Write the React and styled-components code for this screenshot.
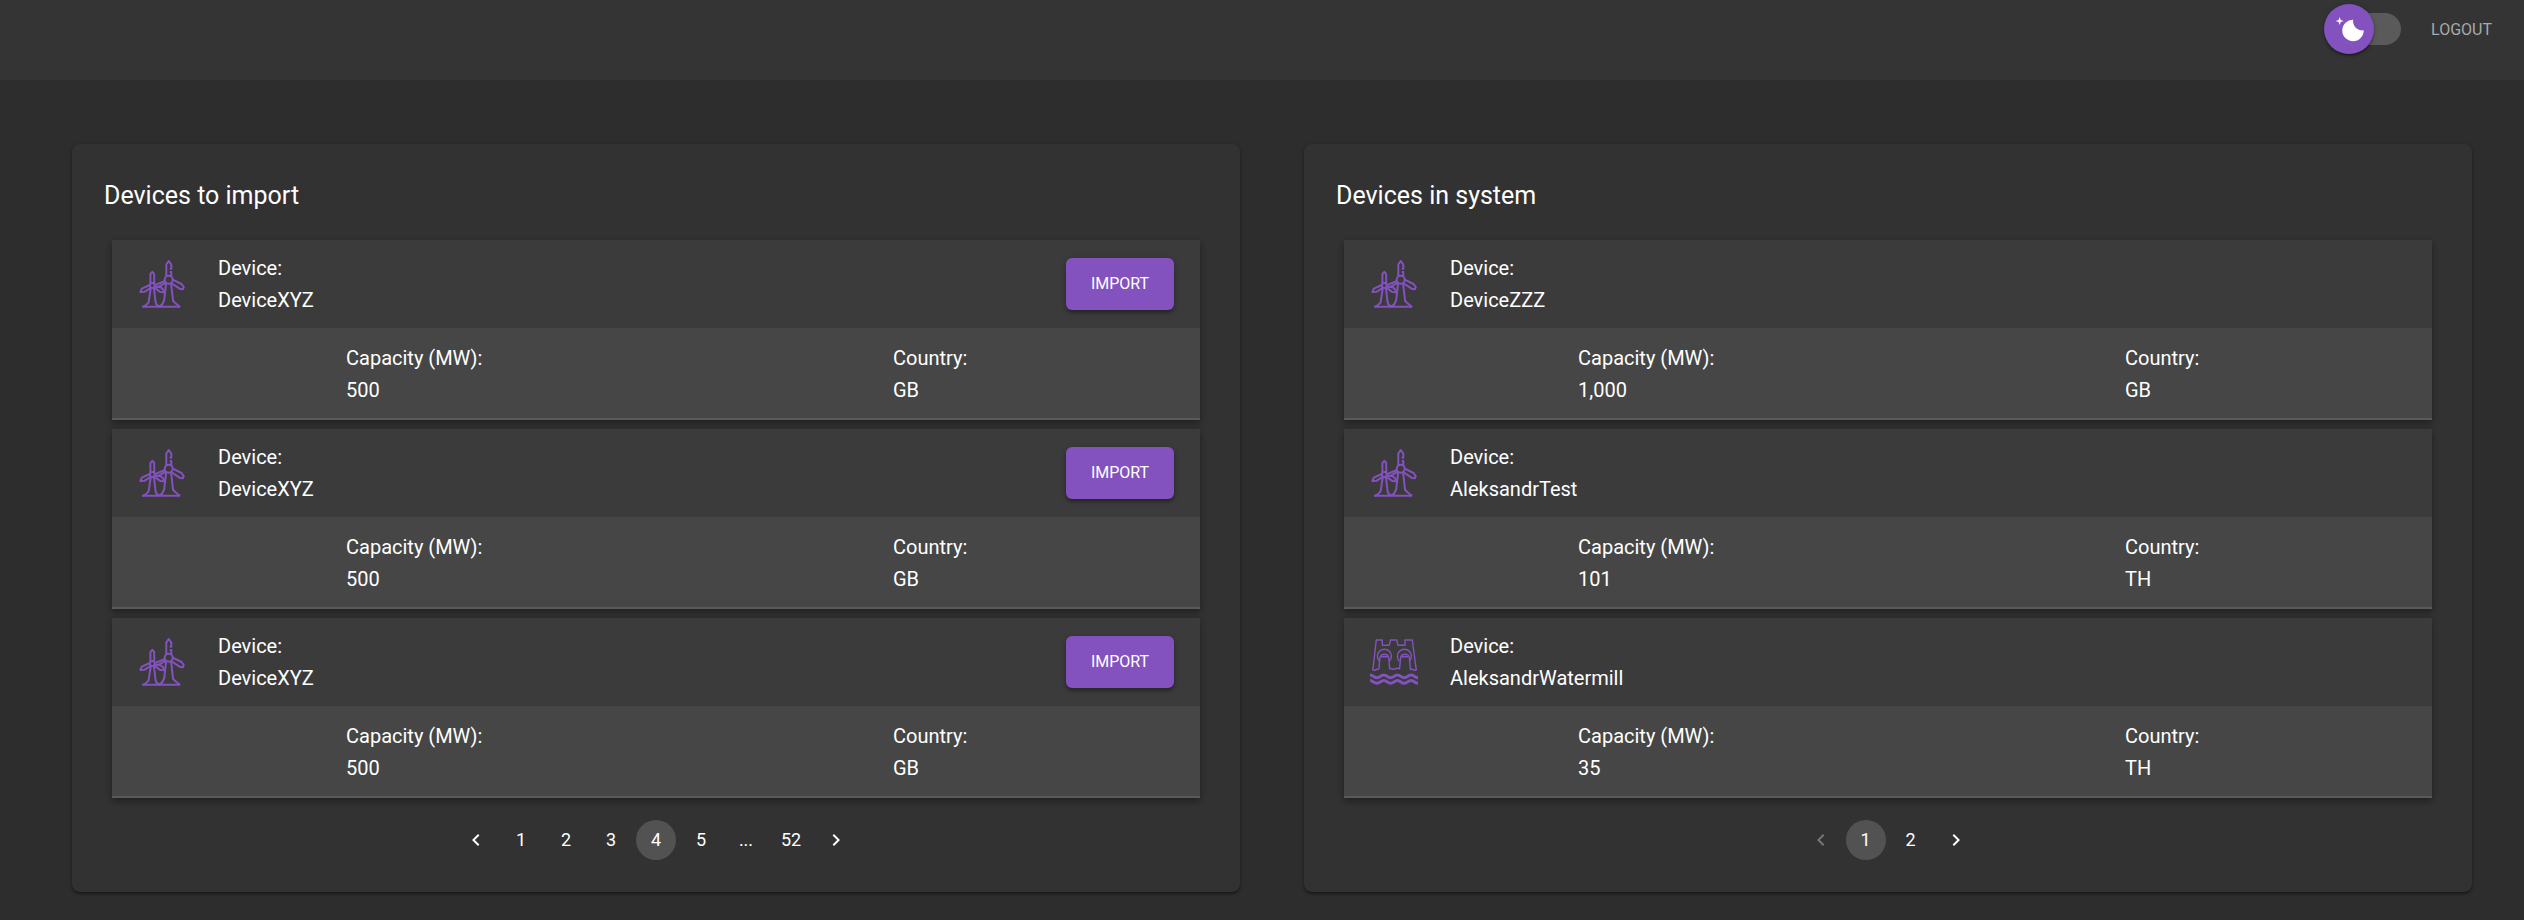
import React, { useState } from "react";
import styled, { createGlobalStyle, css } from "styled-components";
import { MdNavigateBefore, MdNavigateNext } from "react-icons/md";

const GlobalStyle = createGlobalStyle`
  *, *::before, *::after { box-sizing: border-box; }
  body {
    margin: 0;
    background: #2d2d2d;
    color: #fff;
    font-family: Roboto, "Liberation Sans", sans-serif;
    font-size: 20px;
    line-height: 32px;
  }
  button { font: inherit; }
`;

const Header = styled.header`
  display: flex;
  justify-content: flex-end;
  align-items: flex-start;
  gap: 30px;
  height: 80px;
  padding: 4px 32px 0 0;
  background: #343434;
`;

const Switch = styled.label`
  display: flex;
  align-items: center;
  position: relative;
  width: 77px;
  height: 50px;
  cursor: pointer;
`;

const SwitchInput = styled.input`
  position: absolute;
  inset: 0;
  margin: 0;
  opacity: 0;
  cursor: pointer;
`;

const Track = styled.span`
  width: 64px;
  height: 32px;
  margin-left: auto;
  border-radius: 16px;
  background: #5a5a5a;
`;

const Thumb = styled.span`
  position: absolute;
  top: 0;
  left: ${(p) => (p.$on ? "27px" : "0")};
  display: grid;
  place-items: center;
  width: 50px;
  height: 50px;
  border-radius: 50%;
  background: #8352bf;
  box-shadow: 0 2px 2px rgba(0, 0, 0, 0.3), 0 1px 5px rgba(0, 0, 0, 0.2);
  pointer-events: none;
`;

const LogoutButton = styled.button`
  height: 52px;
  padding: 0;
  border: 0;
  background: none;
  color: #a9a9a9;
  font-size: 16px;
  cursor: pointer;
`;

const Main = styled.main`
  display: grid;
  grid-template-columns: 1fr 1fr;
  gap: 64px;
  padding: 64px 52px 28px 72px;
`;

const Card = styled.section`
  padding: 32px;
  border-radius: 8px;
  background: #323232;
  box-shadow: 0 2px 2px rgba(0, 0, 0, 0.3), 0 1px 4px rgba(0, 0, 0, 0.2);
`;

const CardTitle = styled.h2`
  margin: 0 0 24px;
  font-size: 25px;
  font-weight: 400;
  line-height: 40px;
`;

const DeviceList = styled.ul`
  display: grid;
  gap: 9px;
  margin: 0 8px;
  padding: 0;
  list-style: none;
`;

const DeviceItem = styled.li`
  border-bottom: 2px solid #5a5a5a;
  background: #464646;
  box-shadow: 0 4px 6px rgba(0, 0, 0, 0.22), 0 1px 6px rgba(0, 0, 0, 0.16);
`;

const DeviceHead = styled.div`
  display: flex;
  align-items: center;
  gap: 32px;
  padding: 12px 26px;
  background: #3b3b3b;
`;

const DeviceDetails = styled.div`
  display: grid;
  grid-template-columns: 547fr 307fr;
  padding: 14px 0 12px 234px;
`;

const Field = styled.dl`
  flex: 1;
  margin: 0;
`;
const FieldLabel = styled.dt``;
const FieldValue = styled.dd`
  margin: 0;
`;

const ImportButton = styled.button`
  height: 52px;
  min-width: 108px;
  padding: 0 24px;
  border: 0;
  border-radius: 6px;
  background: #8352bf;
  color: #fff;
  font-size: 16px;
  cursor: pointer;
  box-shadow: 0 3px 3px rgba(0, 0, 0, 0.25), 0 1px 6px rgba(0, 0, 0, 0.18);
`;

const Pages = styled.nav`
  display: flex;
  justify-content: center;
  gap: 5px;
  margin-top: 22px;
`;

const pageCell = css`
  display: grid;
  place-items: center;
  width: 40px;
  height: 40px;
  padding: 0;
  font-size: 18px;
  line-height: 40px;
`;

const PageButton = styled.button`
  ${pageCell}
  border: 0;
  border-radius: 50%;
  background: ${(p) => (p.$current ? "#525252" : "none")};
  color: ${(p) => (p.disabled ? "#767676" : "#fff")};
  cursor: pointer;
`;

const PageGap = styled.span`
  ${pageCell}
`;

const DeviceIcon = styled.svg`
  flex: none;
  width: 48px;
  height: 48px;
  fill: none;
  stroke: #8352bf;
  stroke-width: ${(p) => p.$weight};
  stroke-linejoin: round;
`;

function WindIcon() {
  return (
    <DeviceIcon viewBox="0 0 48 48" $weight="2" role="img" aria-label="Wind">
      <circle cx="30.7" cy="19.7" r="4" />
      <circle cx="14.3" cy="25.5" r="2.5" />
      <path d="M28.3 16.2V4.5L30.7 1l2.6 3.5v4.2h-1.6M31.7 12h1.6v4.2" />
      <path d="M12.4 23.2V14l1.9-2.2 1.9 2.2v9.2" />
      <path d="M34.6 19.6l9 4.4 2.2 3.2-.9 2-3.4-.5-7.6-5.2" />
      <path d="M27 21l-10.2 4.2M27.7 22.8l-8.4 4.6" />
      <path d="M11.8 25l-8 3.6L2.4 32l4-.2 6.4-3.9" />
      <path d="M16.8 26.6l6 .7 2.8 2.6.2 2.4-3.4-.2-5.4-4" />
      <path d="M12.8 28l-2.2 14.3-2.6 2.9-3.2 1.6M15.9 28l1.7 14.3c.4 2 1.600 3.600 3.400 4.200 2.200-.4 3.400-2 4.200-4.200L26.200 40l1.900-16.400M33.100 23.600l2 17.400 3 2.800 3.800 3" />
      <path d="M4.2 46.8h38" />
    </DeviceIcon>
  );
}

function HydroIcon() {
  return (
    <DeviceIcon viewBox="0 0 48 48" $weight="1.4" role="img" aria-label="Hydro">
      <path d="M8.4 31.8l-1.6-.7-2 1.2-2-.2L6.3 2h6v5.2h7l1.2-5.2h6.2L28 7.2h7V2h7.3l4 30.1-2 .2-2-1.2-2.4.4" />
      <path d="M9.4 23.2a7 7 0 1 1 10 0M29.4 23.2a7 7 0 1 1 10 0" />
      <path d="M8.8 31.4l1.2-12a4.6 4.6 0 0 1 8.8 0l.8 11.4c1.8-1.2 3.2 1.4 5 .4s3-1.4 5-.4l1-11.4a4.6 4.6 0 0 1 8.8 0l1 12" />
      <path d="M10.6 18.8h7.4M31 18.8h7.4M11.6 16.6h5.6M31.8 16.6h5.6" />
      <path
        strokeWidth="3"
        d="M0 37c3.2 0 3.4 2.7 6.9 2.7s3.5-2.7 6.9-2.7 3.4 2.7 6.8 2.7 3.4-2.7 6.8-2.7 3.5 2.7 6.9 2.7 3.4-2.7 6.8-2.7 3.5 2.7 6.9 2.7M0 42.6c3.2 0 3.4 2.7 6.9 2.7s3.5-2.7 6.9-2.7 3.4 2.7 6.8 2.7 3.4-2.7 6.8-2.7 3.5 2.7 6.9 2.7 3.4-2.7 6.8-2.7 3.5 2.7 6.9 2.7"
      />
    </DeviceIcon>
  );
}

function MoonIcon() {
  return (
    <svg width="32" height="32" viewBox="0 0 20 20" fill="#fff" aria-hidden="true">
      <path d="M4.2 2.5l-.7 1.8-1.8.7 1.8.7.7 1.8.6-1.8L6.7 5l-1.9-.7-.6-1.8zm15 8.3a6.7 6.7 0 1 1-6.6-6.6 5.8 5.8 0 0 0 6.6 6.6z" />
    </svg>
  );
}

function LabeledValue({ label, value }) {
  return (
    <Field>
      <FieldLabel>{label}</FieldLabel>
      <FieldValue>{value}</FieldValue>
    </Field>
  );
}

function Device({ device, importable }) {
  return (
    <DeviceItem>
      <DeviceHead>
        {device.type === "hydro" ? <HydroIcon /> : <WindIcon />}
        <LabeledValue label="Device:" value={device.name} />
        {importable && <ImportButton type="button">IMPORT</ImportButton>}
      </DeviceHead>
      <DeviceDetails>
        <LabeledValue label="Capacity (MW):" value={device.capacity} />
        <LabeledValue label="Country:" value={device.country} />
      </DeviceDetails>
    </DeviceItem>
  );
}

function Pagination({ pages, initial, label }) {
  const [current, setCurrent] = useState(initial);
  const last = pages[pages.length - 1];
  return (
    <Pages aria-label={label}>
      <PageButton
        type="button"
        aria-label="Previous page"
        disabled={current === 1}
        onClick={() => setCurrent(current - 1)}
      >
        <MdNavigateBefore size={24} />
      </PageButton>
      {pages.map((page) =>
        page === "..." ? (
          <PageGap key={page}>...</PageGap>
        ) : (
          <PageButton
            key={page}
            type="button"
            $current={page === current}
            aria-current={page === current ? "page" : undefined}
            onClick={() => setCurrent(page)}
          >
            {page}
          </PageButton>
        )
      )}
      <PageButton
        type="button"
        aria-label="Next page"
        disabled={current === last}
        onClick={() => setCurrent(current + 1)}
      >
        <MdNavigateNext size={24} />
      </PageButton>
    </Pages>
  );
}

const toImport = [1, 2, 3].map((id) => ({
  id,
  type: "wind",
  name: "DeviceXYZ",
  capacity: "500",
  country: "GB",
}));

const inSystem = [
  { id: 1, type: "wind", name: "DeviceZZZ", capacity: "1,000", country: "GB" },
  { id: 2, type: "wind", name: "AleksandrTest", capacity: "101", country: "TH" },
  { id: 3, type: "hydro", name: "AleksandrWatermill", capacity: "35", country: "TH" },
];

export default function App() {
  const [light, setLight] = useState(false);
  return (
    <>
      <GlobalStyle />
      <Header>
        <Switch>
          <SwitchInput
            type="checkbox"
            role="switch"
            aria-label="Light theme"
            checked={light}
            onChange={(e) => setLight(e.target.checked)}
          />
          <Track />
          <Thumb $on={light}>
            <MoonIcon />
          </Thumb>
        </Switch>
        <LogoutButton type="button">LOGOUT</LogoutButton>
      </Header>
      <Main>
        <Card>
          <CardTitle>Devices to import</CardTitle>
          <DeviceList>
            {toImport.map((d) => (
              <Device key={d.id} device={d} importable />
            ))}
          </DeviceList>
          <Pagination label="Devices to import pages" initial={4} pages={[1, 2, 3, 4, 5, "...", 52]} />
        </Card>
        <Card>
          <CardTitle>Devices in system</CardTitle>
          <DeviceList>
            {inSystem.map((d) => (
              <Device key={d.id} device={d} />
            ))}
          </DeviceList>
          <Pagination label="Devices in system pages" initial={1} pages={[1, 2]} />
        </Card>
      </Main>
    </>
  );
}
